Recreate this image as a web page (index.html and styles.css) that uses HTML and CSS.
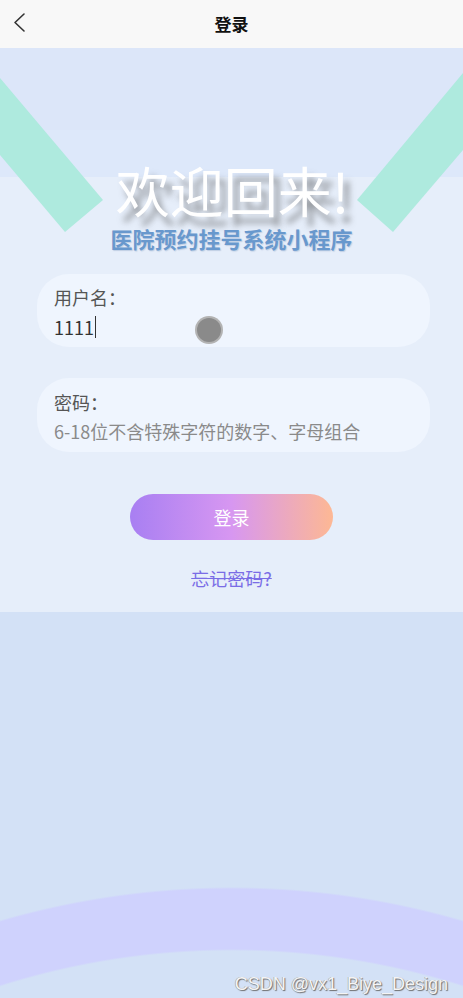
FILE: index.html
```html
<!DOCTYPE html>
<html lang="zh-CN">
<head>
<meta charset="utf-8">
<title>登录</title>
<link rel="stylesheet" href="styles.css">
</head>
<body>
<header class="nav">
  <span class="back">
    <svg width="16" height="22" viewBox="0 0 16 22"><path d="M12 3 L3 11.5 L12 20" fill="none" stroke="#333" stroke-width="1.6" stroke-linecap="round" stroke-linejoin="round"/></svg>
  </span>
  <h1 class="nav-title">登录</h1>
</header>
<main class="main">
  <div class="hero-title">欢迎回来!</div>
  <div class="subtitle">医院预约挂号系统小程序</div>
  <div class="field field-user">
    <div class="label">用户名：</div>
    <div class="value">1111<span class="caret"></span></div>
    <span class="touch"></span>
  </div>
  <div class="field field-pass">
    <div class="label">密码：</div>
    <div class="placeholder">6-18位不含特殊字符的数字、字母组合</div>
  </div>
  <button class="btn">登录</button>
  <div class="forgot">忘记密码?</div>
  <div class="spacer"></div>
  <div class="watermark">CSDN @vx1_Biye_Design</div>
</main>
</body>
</html>
```
FILE: styles.css
```css
* { box-sizing: border-box; }
html, body { margin: 0; padding: 0; }
body {
  width: 463px;
  height: 998px;
  overflow: hidden;
  font-family: "Noto Sans CJK SC", "Noto Sans", sans-serif;
  background: #d3e1f6;
}
.nav {
  height: 48px;
  background: #f8f8f8;
  display: flex;
  align-items: center;
  justify-content: center;
  position: relative;
}
.back {
  position: absolute;
  left: 12px;
  top: 11px;
  width: 16px;
  height: 22px;
  display: flex;
}
.nav-title {
  margin: 0;
  font-size: 17px;
  font-weight: 700;
  color: #111;
  line-height: 24px;
}
.main {
  height: 950px;
  display: flex;
  flex-direction: column;
  align-items: center;
  background:
    url("data:image/svg+xml;utf8,<svg xmlns='http://www.w3.org/2000/svg' width='463' height='200'><polygon points='0,30 103,152 65,184 0,107' fill='%23aeeade'/><polygon points='463,25 357,152 393,184 463,102' fill='%23aeeade'/></svg>") no-repeat 0 0 / 463px 200px,
    radial-gradient(circle at 231.5px 1668px, transparent 765px, #cfd2fd 767px, #cfd2fd 827px, transparent 829px),
    linear-gradient(to bottom, #dce6f9 0, #dce6f9 82px, #dde8fa 82px, #dde8fa 129px, #e6eefa 129px, #e6eefa 564px, #d3e1f6 564px);
}
.hero-title {
  margin-top: 114px;
  height: 56px;
  line-height: 56px;
  font-size: 54px;
  font-weight: 400;
  color: #fff;
  text-shadow: 6px 9px 6px rgba(80, 80, 80, 0.55);
  margin-left: 2px;
}
.subtitle {
  margin-top: 5px;
  height: 30px;
  line-height: 30px;
  font-size: 22px;
  font-weight: 700;
  color: #6898cd;
  text-shadow: 1px 1px 1px rgba(80, 110, 160, 0.25);
}
.field {
  width: 393px;
  height: 73px;
  border-radius: 32px;
  background: #eff5fe;
  padding: 10px 17px 0;
  position: relative;
  font-size: 18px;
  margin-left: 4px;
}
.field-user { margin-top: 21px; }
.field-pass { margin-top: 31px; height: 74px; }
.label {
  height: 26px;
  line-height: 26px;
  color: #555;
}
.value, .placeholder {
  margin-top: 4px;
  height: 26px;
  line-height: 26px;
  color: #333;
  display: flex;
  align-items: center;
}
.field-pass .label { margin-top: 1px; }
.field-pass .placeholder { margin-top: 3px; color: #8a8a8a; }
.caret {
  display: inline-block;
  width: 1px;
  height: 22px;
  background: #333;
  margin-left: 1px;
}
.touch {
  position: absolute;
  left: 160px;
  top: 44px;
  width: 24px;
  height: 24px;
  border-radius: 50%;
  background: #8a8a8a;
  box-shadow: 0 0 0 2px #b3b3b3;
}
.btn {
  margin-top: 42px;
  width: 203px;
  height: 46px;
  border: none;
  border-radius: 23px;
  background: linear-gradient(to right, #a87ff2 0%, #d797f1 50%, #fdb894 100%);
  color: #fff;
  font-family: inherit;
  font-size: 18px;
  line-height: 46px;
  padding: 0;
}
.forgot {
  margin-top: 25px;
  height: 26px;
  line-height: 26px;
  font-size: 18px;
  color: #7a6de6;
  text-decoration: line-through;
}
.spacer { flex: 1; }
.watermark {
  align-self: flex-end;
  margin-right: 15px;
  margin-bottom: 3px;
  font-family: "Liberation Sans", Arial, sans-serif;
  font-size: 18px;
  line-height: 22px;
  color: #f4f4f4;
  text-shadow: 1px 1px 1px #6d6d6d, -0.5px -0.5px 0 #9a9a9a;
}
```
